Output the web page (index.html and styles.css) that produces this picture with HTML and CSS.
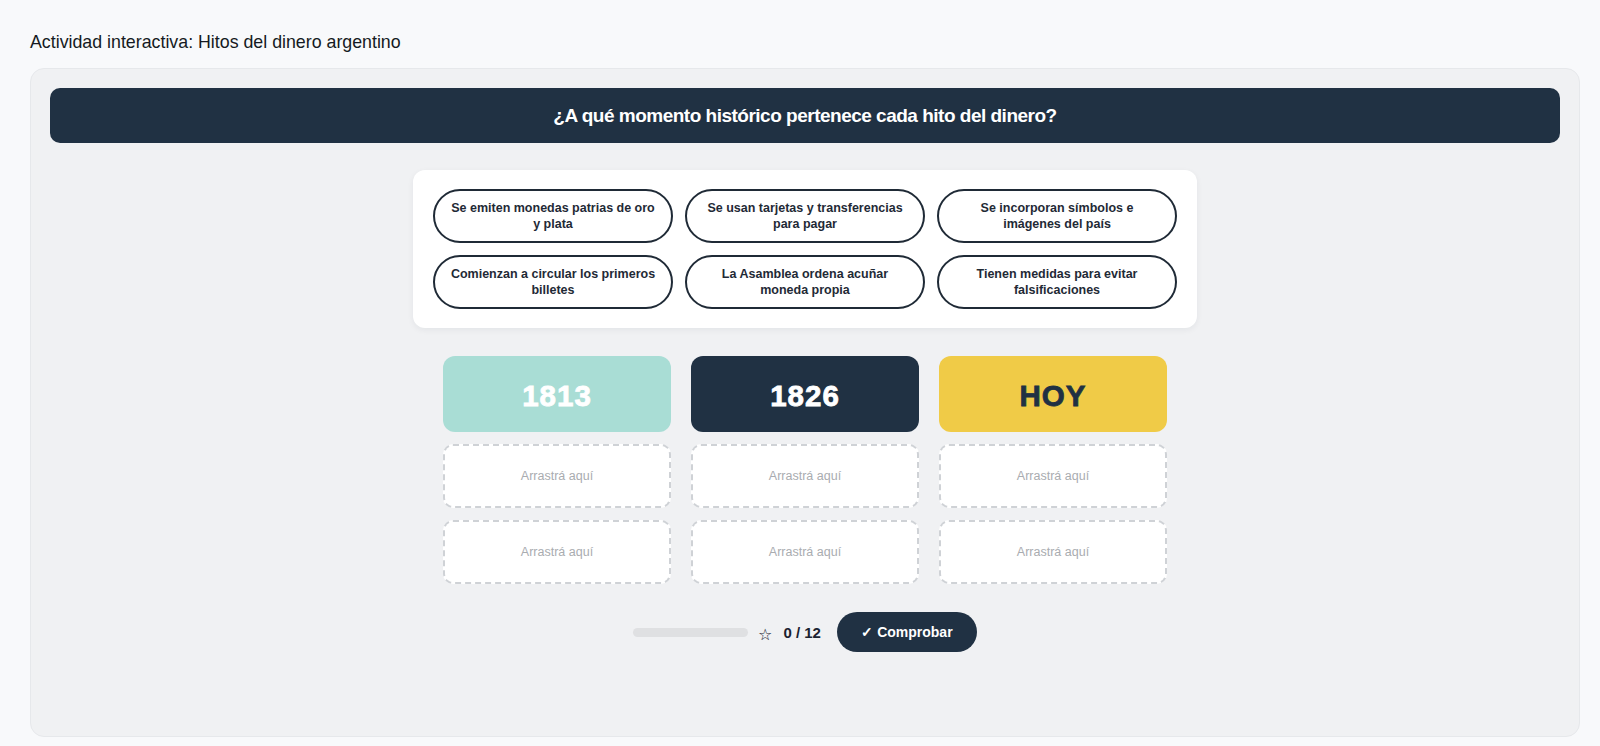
FILE: index.html
```html
<!DOCTYPE html>
<html lang="es">
<head>
<meta charset="utf-8">
<title>Actividad interactiva: Hitos del dinero argentino</title>
<link rel="stylesheet" href="styles.css">
</head>
<body>
<main class="page">
  <h1 class="page-title">Actividad interactiva: Hitos del dinero argentino</h1>
  <section class="activity">
    <header class="question">¿A qué momento histórico pertenece cada hito del dinero?</header>

    <div class="bank">
      <div class="chip">Se emiten monedas patrias de oro y plata</div>
      <div class="chip">Se usan tarjetas y transferencias para pagar</div>
      <div class="chip">Se incorporan símbolos e imágenes del país</div>
      <div class="chip">Comienzan a circular los primeros billetes</div>
      <div class="chip">La Asamblea ordena acuñar moneda propia</div>
      <div class="chip">Tienen medidas para evitar falsificaciones</div>
    </div>

    <div class="columns">
      <div class="column">
        <div class="year year-teal">1813</div>
        <div class="drop">Arrastrá aquí</div>
        <div class="drop">Arrastrá aquí</div>
      </div>
      <div class="column">
        <div class="year year-dark">1826</div>
        <div class="drop">Arrastrá aquí</div>
        <div class="drop">Arrastrá aquí</div>
      </div>
      <div class="column">
        <div class="year year-yellow">HOY</div>
        <div class="drop">Arrastrá aquí</div>
        <div class="drop">Arrastrá aquí</div>
      </div>
    </div>

    <div class="footer">
      <div class="progress"><div class="progress-fill" style="width:0%"></div></div>
      <span class="star">☆</span>
      <span class="score">0 / 12</span>
      <button class="check">✓ Comprobar</button>
    </div>
  </section>
</main>
</body>
</html>
```

FILE: styles.css
```css
* { box-sizing: border-box; }

html, body {
  margin: 0;
  padding: 0;
  background: #f8f9fb;
  font-family: "Liberation Sans", Arial, sans-serif;
  color: #1b2230;
}

.page {
  padding: 31px 20px 9px 30px;
}

.page-title {
  margin: 0 0 15px 0;
  font-size: 17.8px;
  font-weight: 400;
  line-height: 22px;
  color: #151a22;
}

.activity {
  background: #f0f1f3;
  border: 1px solid #e6e8eb;
  border-radius: 14px;
  padding: 19px 19px 0 19px;
  height: 669px;
}

.question {
  background: #203143;
  color: #ffffff;
  border-radius: 10px;
  height: 55px;
  display: flex;
  align-items: center;
  justify-content: center;
  font-size: 19px;
  font-weight: 700;
  letter-spacing: -0.5px;
}

.bank {
  width: 784px;
  margin: 27px auto 0 auto;
  background: #ffffff;
  border-radius: 12px;
  box-shadow: 0 2px 6px rgba(20, 30, 45, 0.06);
  padding: 19px 20px;
  display: grid;
  grid-template-columns: repeat(3, 240px);
  gap: 12px;
}

.chip {
  height: 54px;
  border: 2px solid #1f2a36;
  border-radius: 27px;
  display: flex;
  align-items: center;
  justify-content: center;
  text-align: center;
  padding: 0 12px;
  font-size: 12.5px;
  font-weight: 700;
  line-height: 16px;
  color: #1f2a36;
}

.columns {
  margin: 28px auto 0 auto;
  width: 724px;
  display: grid;
  grid-template-columns: repeat(3, 228px);
  gap: 20px;
}

.column {
  display: flex;
  flex-direction: column;
  gap: 12px;
}

.year {
  height: 76px;
  border-radius: 12px;
  display: flex;
  align-items: center;
  justify-content: center;
  font-size: 29.5px;
  font-weight: 700;
  -webkit-text-stroke: 0.8px currentColor;
  letter-spacing: 1px;
  padding-top: 3px;
}

.year-teal { background: #a9ddd5; color: #ffffff; }
.year-dark { background: #203143; color: #ffffff; }
.year-yellow { background: #f0cb47; color: #203143; }

.drop {
  height: 64px;
  background: #ffffff;
  border: 2px dashed #cfd2d6;
  border-radius: 10px;
  display: flex;
  align-items: center;
  justify-content: center;
  font-size: 12.5px;
  color: #a9acb0;
}

.footer {
  margin-top: 28px;
  display: flex;
  align-items: center;
  justify-content: center;
}

.progress {
  width: 115px;
  height: 9px;
  border-radius: 5px;
  background: #dfe0e2;
  overflow: hidden;
}

.progress-fill {
  height: 100%;
  background: #a9ddd5;
}

.star {
  margin-left: 10px;
  font-size: 16px;
  color: #1b2230;
  font-family: "DejaVu Sans", sans-serif;
  position: relative;
  top: 2px;
}

.score {
  margin-left: 11px;
  font-size: 15px;
  font-weight: 700;
  color: #1b2230;
}

.check {
  margin-left: 16px;
  width: 140px;
  height: 40px;
  border: none;
  border-radius: 20px;
  background: #203143;
  color: #ffffff;
  font-family: "Liberation Sans", Arial, sans-serif;
  font-size: 14px;
  font-weight: 700;
  cursor: pointer;
}
```
